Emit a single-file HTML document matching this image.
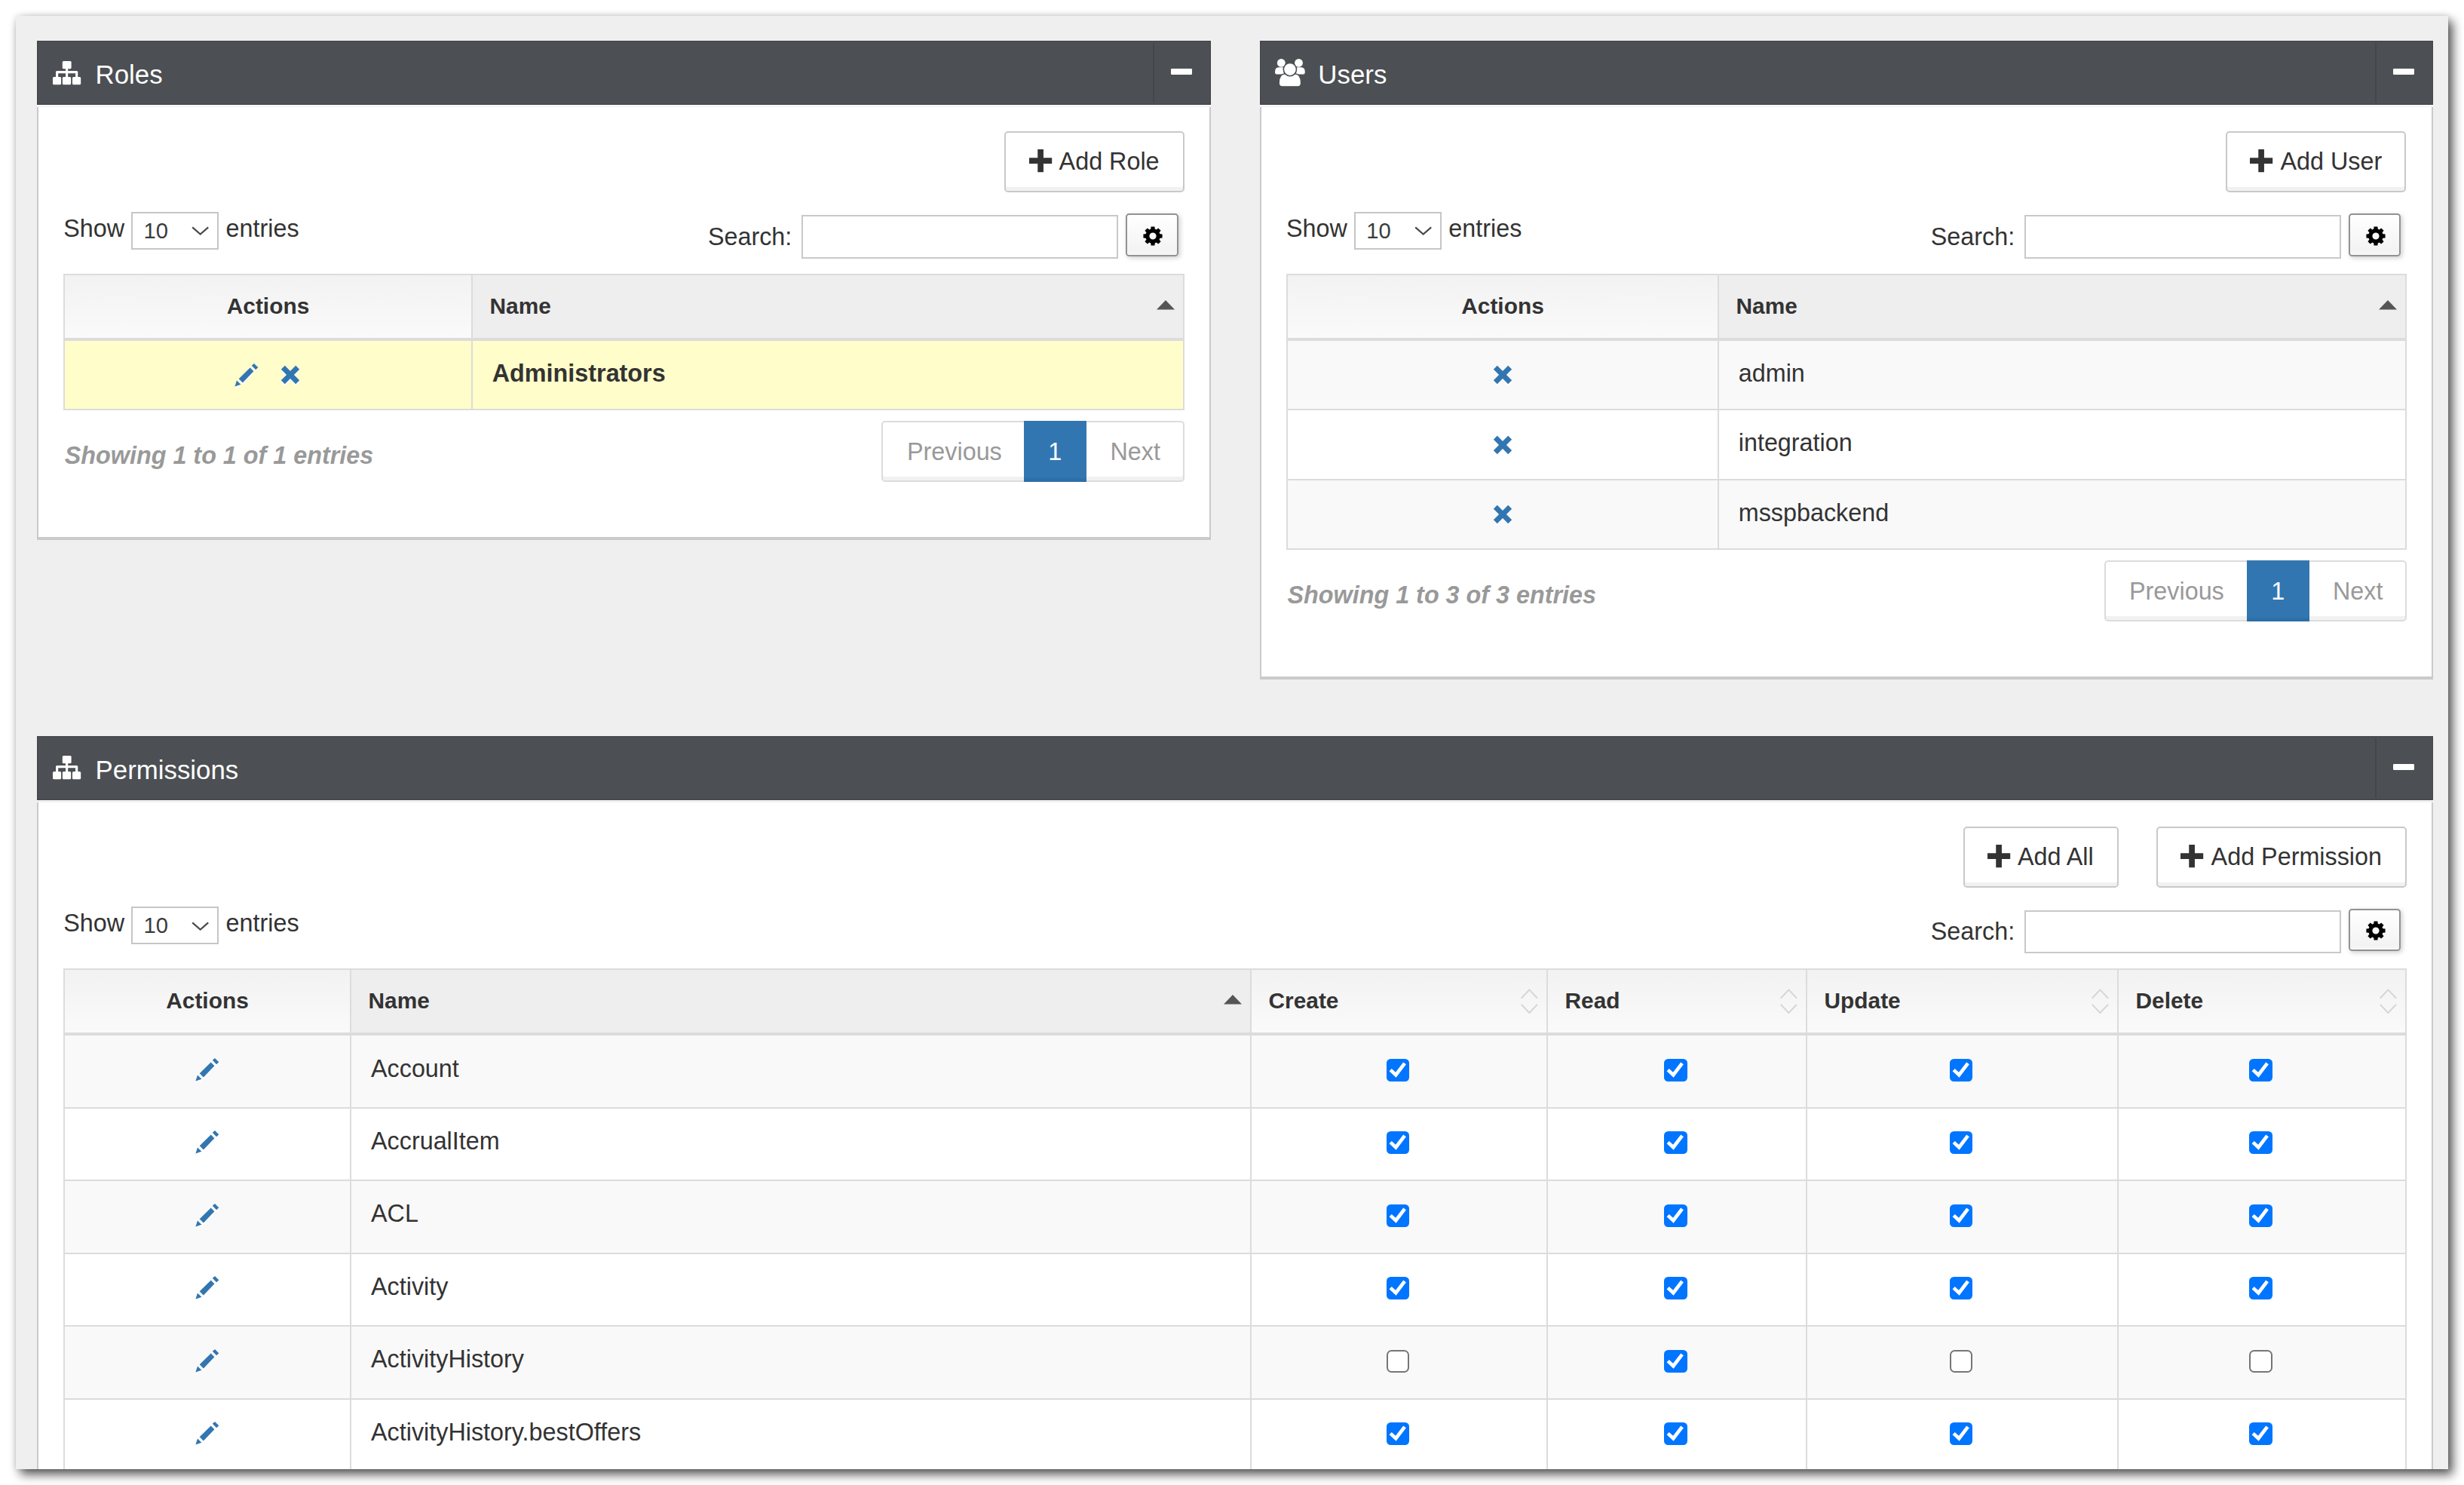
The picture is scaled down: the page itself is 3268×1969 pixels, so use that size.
<!DOCTYPE html>
<html lang="en"><head><meta charset="utf-8"><title>Roles, Users and Permissions</title>
<style>
html,body{margin:0;padding:0;background:#fff;}
body{width:3268px;height:1969px;position:relative;overflow:hidden;font-family:"Liberation Sans",Arial,Helvetica,sans-serif;}
#card{position:absolute;left:21px;top:21px;width:3226px;height:1927px;background:#efefef;border-radius:5px 2px 1px 2px;overflow:hidden;
  }
#shadow{position:absolute;left:21px;top:21px;width:3226px;height:1927px;border-radius:5px 2px 1px 2px;
  box-shadow:6px 7px 14px 0 rgba(0,0,0,.66),0 0 9px rgba(0,0,0,.13);}
#card div,#card svg,#card .t{position:absolute;}
#card svg{overflow:visible;display:block;}
.t{white-space:nowrap;margin:0;padding:0;font-weight:normal;}
#in{position:absolute;left:-21px;top:-21px;width:3268px;height:1969px;}
</style></head>
<body>
<div id="shadow"></div>
<div id="card"><div id="in">
<section aria-label="Roles">
<div class="hd" style="left:49px;top:54px;width:1557px;height:84.8px;background:#4c4f53;box-shadow:inset 0 0 0 1.3px #43464a;"></div>
<div  style="left:49px;top:138.8px;width:1557px;height:1.8px;background:#fbfbfb;"></div>
<div class="bd" style="left:49px;top:142px;width:1557px;height:573.75px;background:#fff;border:solid #cacaca;border-width:0 2px 4.6px 2px;box-sizing:border-box;"></div>
<svg style="left:70px;top:80.8px;" width="37.4" height="31.3" viewBox="0 0 37.4 31.3"><g fill="#fff"><rect x="12.8" y="0" width="11.8" height="10.3" rx="1.5"/><rect x="0" y="21" width="11.1" height="10.3" rx="1.5"/><rect x="12.9" y="21" width="11.3" height="10.3" rx="1.5"/><rect x="26.0" y="21" width="11.2" height="10.3" rx="1.5"/></g><path fill="none" stroke="#fff" stroke-width="3.2" stroke-linejoin="round" d="M5.6 22 V14.6 H31.7 V22 M18.6 9 V22"/></svg>
<h2 class="t" style="left:126.6px;top:81.9px;font-size:34.84px;line-height:34.84px;color:#fff;">Roles</h2>
<div  style="left:1529.2px;top:57px;width:2px;height:79px;background:#43464a;"></div>
<div  style="left:1552.7px;top:90.8px;width:28.8px;height:8.4px;background:#fff;border-radius:1.2px;"></div>
<div class="btn" style="left:1332.4px;top:174px;width:238.6px;height:80.6px;background:#fff;border:2px solid #c9c9c9;border-radius:5px;box-sizing:border-box;box-shadow:inset 0 -5px 0 rgba(0,0,0,.055);"></div>
<svg style="left:1364.7px;top:197.8px;" width="30.2" height="30.2" viewBox="0 0 30.2 30.2"><path fill="#333" d="M11.25 0h7.7v11.25h11.25v7.7h-11.25v11.25h-7.7v-11.25h-11.25v-7.7h11.25z"/></svg>
<span class="t" style="left:1404.6px;top:198.01px;font-size:32.35px;line-height:32.35px;color:#333;">Add Role</span>
<span class="t" style="left:84.2px;top:287.11px;font-size:32.35px;line-height:32.35px;color:#333;">Show</span>
<div class="sel" style="left:174.25px;top:281.25px;width:115.5px;height:49.5px;background:#fff;border:2px solid #c6c6c6;box-sizing:border-box;"></div>
<span class="t" style="left:190.5px;top:291.88px;font-size:29.2px;line-height:29.2px;color:#3c3c3c;">10</span>
<svg style="left:254.2px;top:300.4px;" width="23.4" height="12.4" viewBox="0 0 23.4 12.4"><path fill="none" stroke="#4a4a4a" stroke-width="2.2" stroke-linejoin="miter" d="M1.2 1.3 L11.7 10.5 L22.2 1.3"/></svg>
<span class="t" style="left:299.6px;top:287.11px;font-size:32.35px;line-height:32.35px;color:#333;">entries</span>
<div class="inp" style="left:1063px;top:285.4px;width:420px;height:57.3px;background:#fff;border:2px solid #c9c9c9;box-sizing:border-box;"></div>
<span class="t" style="left:938.91px;top:297.61px;font-size:32.35px;line-height:32.35px;color:#333;">Search:</span>
<div class="cv" style="left:1493px;top:283.2px;width:69.6px;height:56.6px;background:linear-gradient(#fff,#f3f3f3 89%,#f7f7f7);border:2px solid #929292;border-radius:4.5px;box-sizing:border-box;box-shadow:2px 2px 6px rgba(0,0,0,.2);"></div>
<svg style="left:1514.6px;top:298.8px;" width="28" height="28" viewBox="-14 -14 28 28"><path fill="#000" fill-rule="evenodd" d="M-2.7 -9.42 L-2.44 -12.56 L2.44 -12.56 L2.7 -9.42 L4.75 -8.57 L7.16 -10.61 L10.61 -7.16 L8.57 -4.75 L9.42 -2.7 L12.56 -2.44 L12.56 2.44 L9.42 2.7 L8.57 4.75 L10.61 7.16 L7.16 10.61 L4.75 8.57 L2.7 9.42 L2.44 12.56 L-2.44 12.56 L-2.7 9.42 L-4.75 8.57 L-7.16 10.61 L-10.61 7.16 L-8.57 4.75 L-9.42 2.7 L-12.56 2.44 L-12.56 -2.44 L-9.42 -2.7 L-8.57 -4.75 L-10.61 -7.16 L-7.16 -10.61 L-4.75 -8.57Z M4.6 0 A4.6 4.6 0 1 0 -4.6 0 A4.6 4.6 0 1 0 4.6 0Z"/></svg>
<div class="tb" style="left:84px;top:363px;width:1487px;height:181px;background:#dcdcdc;"></div>
<div class="th" style="left:86px;top:365px;width:539px;height:83px;background:linear-gradient(#f2f2f2,#fafafa);"></div>
<span class="t" style="left:300.75px;top:391.32px;font-size:29.86px;line-height:29.86px;color:#333;font-weight:bold;">Actions</span>
<div class="th" style="left:627px;top:365px;width:942px;height:83px;background:#eee;"></div>
<span class="t" style="left:649.5px;top:391.32px;font-size:29.86px;line-height:29.86px;color:#333;font-weight:bold;">Name</span>
<svg style="left:1533.6px;top:397.8px;" width="24" height="12.6" viewBox="0 0 24 12.6"><path fill="#555" d="M12 0L24 12.6H0Z"/></svg>
<div class="td" style="left:86px;top:452px;width:539px;height:90px;background:#fffdc9;"></div>
<svg style="left:310.5px;top:481.6px;" width="32" height="34" viewBox="0 0 32 34"><path fill="#fff" d="M26 2.5 L31.3 7.67 L28.1 10.85 L22.8 5.24Z"/><path fill="#fff" d="M20.7 7.97 L25.4 12.67 L10.86 27.97 L5.7 22.67Z"/><path fill="#fff" d="M2.98 25.1 L8.44 30.24 L0.4 33.1Z"/><path fill="#3276b1" d="M26 0 L31.3 5.17 L28.1 8.35 L22.8 2.74Z"/><path fill="#3276b1" d="M20.7 5.47 L25.4 10.17 L10.86 25.47 L5.7 20.17Z"/><path fill="#3276b1" d="M2.98 22.6 L8.44 27.74 L0.4 30.6Z"/></svg>
<svg style="left:365.1px;top:477.1px;" width="40" height="44" viewBox="0 0 40 44"><path transform="translate(20 22.5) rotate(45)" fill="#fff" d="M-3.5 -13.7h7v10.2h10.2v7h-10.2v10.2h-7v-10.2h-10.2v-7h10.2z"/><path transform="translate(20 20) rotate(45)" fill="#3276b1" d="M-3.5 -13.7h7v10.2h10.2v7h-10.2v10.2h-7v-10.2h-10.2v-7h10.2z"/></svg>
<div class="td" style="left:627px;top:452px;width:942px;height:90px;background:#fffdc9;"></div>
<span class="t" style="left:652.75px;top:478.86px;font-size:32.35px;line-height:32.35px;color:#333;font-weight:bold;">Administrators</span>
<span class="t" style="left:85.75px;top:587.61px;font-size:32.35px;line-height:32.35px;color:#999;font-weight:bold;font-style:italic;">Showing 1 to 1 of 1 entries</span>
<div class="pg" style="left:1169.3px;top:558px;width:401.9px;height:80.75px;background:#fff;border:2px solid #dcdcdc;border-radius:5px;box-sizing:border-box;box-shadow:inset 0 -5px 0 rgba(0,0,0,.055);"></div>
<div  style="left:1358px;top:558px;width:83px;height:80.75px;background:#3276b1;box-shadow:inset 0 -5px 0 rgba(0,0,0,.055);"></div>
<span class="t" style="left:1203px;top:582.61px;font-size:32.35px;line-height:32.35px;color:#999;">Previous</span>
<span class="t" style="left:1390.3px;top:582.61px;font-size:32.35px;line-height:32.35px;color:#fff;">1</span>
<span class="t" style="left:1472.5px;top:582.61px;font-size:32.35px;line-height:32.35px;color:#999;">Next</span>
</section>
<section aria-label="Users">
<div class="hd" style="left:1670.75px;top:54px;width:1556.25px;height:84.8px;background:#4c4f53;box-shadow:inset 0 0 0 1.3px #43464a;"></div>
<div  style="left:1670.75px;top:138.8px;width:1556.25px;height:1.8px;background:#fbfbfb;"></div>
<div class="bd" style="left:1670.75px;top:142px;width:1556.25px;height:758.75px;background:#fff;border:solid #cacaca;border-width:0 2px 4.6px 2px;box-sizing:border-box;"></div>
<svg style="left:1691.25px;top:77.5px;" width="39.8" height="36.8" viewBox="0 0 39.8 36.8"><g fill="#fff"><circle cx="8.3" cy="5.4" r="5.4"/><circle cx="31.5" cy="5.4" r="5.4"/><path d="M0 17.5 Q0 11.3 5 11.3 L12 11.3 L12 20.6 L3.2 20.6 Q0 20.6 0 17.7Z"/><path d="M39.8 17.5 Q39.8 11.3 34.8 11.3 L27.8 11.3 L27.8 20.6 L36.6 20.6 Q39.8 20.6 39.8 17.7Z"/><path d="M5.3 32 Q5.3 19.8 13.5 19.8 L26.3 19.8 Q34.5 19.8 34.5 32 Q34.5 36.8 30 36.8 L9.8 36.8 Q5.3 36.8 5.3 32Z" stroke="#4c4f53" stroke-width="1.2"/><circle cx="19.9" cy="14.1" r="8.6" stroke="#4c4f53" stroke-width="1.6"/></g></svg>
<h2 class="t" style="left:1748.35px;top:81.9px;font-size:34.84px;line-height:34.84px;color:#fff;">Users</h2>
<div  style="left:3150.2px;top:57px;width:2px;height:79px;background:#43464a;"></div>
<div  style="left:3173.7px;top:90.8px;width:28.8px;height:8.4px;background:#fff;border-radius:1.2px;"></div>
<div class="btn" style="left:2952.3px;top:174px;width:239.2px;height:80.6px;background:#fff;border:2px solid #c9c9c9;border-radius:5px;box-sizing:border-box;box-shadow:inset 0 -5px 0 rgba(0,0,0,.055);"></div>
<svg style="left:2984px;top:197.8px;" width="30.2" height="30.2" viewBox="0 0 30.2 30.2"><path fill="#333" d="M11.25 0h7.7v11.25h11.25v7.7h-11.25v11.25h-7.7v-11.25h-11.25v-7.7h11.25z"/></svg>
<span class="t" style="left:3024.4px;top:198.01px;font-size:32.35px;line-height:32.35px;color:#333;">Add User</span>
<span class="t" style="left:1705.95px;top:287.11px;font-size:32.35px;line-height:32.35px;color:#333;">Show</span>
<div class="sel" style="left:1796px;top:281.25px;width:115.5px;height:49.5px;background:#fff;border:2px solid #c6c6c6;box-sizing:border-box;"></div>
<span class="t" style="left:1812.25px;top:291.88px;font-size:29.2px;line-height:29.2px;color:#3c3c3c;">10</span>
<svg style="left:1875.95px;top:300.4px;" width="23.4" height="12.4" viewBox="0 0 23.4 12.4"><path fill="none" stroke="#4a4a4a" stroke-width="2.2" stroke-linejoin="miter" d="M1.2 1.3 L11.7 10.5 L22.2 1.3"/></svg>
<span class="t" style="left:1921.35px;top:287.11px;font-size:32.35px;line-height:32.35px;color:#333;">entries</span>
<div class="inp" style="left:2684.9px;top:285.4px;width:420px;height:57.3px;background:#fff;border:2px solid #c9c9c9;box-sizing:border-box;"></div>
<span class="t" style="left:2560.81px;top:297.61px;font-size:32.35px;line-height:32.35px;color:#333;">Search:</span>
<div class="cv" style="left:3114.9px;top:283.2px;width:69.6px;height:56.6px;background:linear-gradient(#fff,#f3f3f3 89%,#f7f7f7);border:2px solid #929292;border-radius:4.5px;box-sizing:border-box;box-shadow:2px 2px 6px rgba(0,0,0,.2);"></div>
<svg style="left:3136.5px;top:298.8px;" width="28" height="28" viewBox="-14 -14 28 28"><path fill="#000" fill-rule="evenodd" d="M-2.7 -9.42 L-2.44 -12.56 L2.44 -12.56 L2.7 -9.42 L4.75 -8.57 L7.16 -10.61 L10.61 -7.16 L8.57 -4.75 L9.42 -2.7 L12.56 -2.44 L12.56 2.44 L9.42 2.7 L8.57 4.75 L10.61 7.16 L7.16 10.61 L4.75 8.57 L2.7 9.42 L2.44 12.56 L-2.44 12.56 L-2.7 9.42 L-4.75 8.57 L-7.16 10.61 L-10.61 7.16 L-8.57 4.75 L-9.42 2.7 L-12.56 2.44 L-12.56 -2.44 L-9.42 -2.7 L-8.57 -4.75 L-10.61 -7.16 L-7.16 -10.61 L-4.75 -8.57Z M4.6 0 A4.6 4.6 0 1 0 -4.6 0 A4.6 4.6 0 1 0 4.6 0Z"/></svg>
<div class="tb" style="left:1706px;top:363px;width:1486px;height:366px;background:#dcdcdc;"></div>
<div class="th" style="left:1708px;top:365px;width:570px;height:83px;background:linear-gradient(#f2f2f2,#fafafa);"></div>
<span class="t" style="left:1938.25px;top:391.32px;font-size:29.86px;line-height:29.86px;color:#333;font-weight:bold;">Actions</span>
<div class="th" style="left:2280px;top:365px;width:910px;height:83px;background:#eee;"></div>
<span class="t" style="left:2302.5px;top:391.32px;font-size:29.86px;line-height:29.86px;color:#333;font-weight:bold;">Name</span>
<svg style="left:3154.6px;top:397.8px;" width="24" height="12.6" viewBox="0 0 24 12.6"><path fill="#555" d="M12 0L24 12.6H0Z"/></svg>
<div class="td" style="left:1708px;top:452px;width:570px;height:90px;background:#f9f9f9;"></div>
<svg style="left:1973px;top:477.15px;" width="40" height="44" viewBox="0 0 40 44"><path transform="translate(20 22.5) rotate(45)" fill="#fff" d="M-3.5 -13.7h7v10.2h10.2v7h-10.2v10.2h-7v-10.2h-10.2v-7h10.2z"/><path transform="translate(20 20) rotate(45)" fill="#3276b1" d="M-3.5 -13.7h7v10.2h10.2v7h-10.2v10.2h-7v-10.2h-10.2v-7h10.2z"/></svg>
<div class="td" style="left:2280px;top:452px;width:910px;height:90px;background:#f9f9f9;"></div>
<span class="t" style="left:2305.75px;top:478.86px;font-size:32.35px;line-height:32.35px;color:#333;">admin</span>
<div class="td" style="left:1708px;top:544px;width:570px;height:91px;background:#fff;"></div>
<svg style="left:1973px;top:569.65px;" width="40" height="44" viewBox="0 0 40 44"><path transform="translate(20 22.5) rotate(45)" fill="#fff" d="M-3.5 -13.7h7v10.2h10.2v7h-10.2v10.2h-7v-10.2h-10.2v-7h10.2z"/><path transform="translate(20 20) rotate(45)" fill="#3276b1" d="M-3.5 -13.7h7v10.2h10.2v7h-10.2v10.2h-7v-10.2h-10.2v-7h10.2z"/></svg>
<div class="td" style="left:2280px;top:544px;width:910px;height:91px;background:#fff;"></div>
<span class="t" style="left:2305.75px;top:571.36px;font-size:32.35px;line-height:32.35px;color:#333;">integration</span>
<div class="td" style="left:1708px;top:637px;width:570px;height:90px;background:#f9f9f9;"></div>
<svg style="left:1973px;top:662.15px;" width="40" height="44" viewBox="0 0 40 44"><path transform="translate(20 22.5) rotate(45)" fill="#fff" d="M-3.5 -13.7h7v10.2h10.2v7h-10.2v10.2h-7v-10.2h-10.2v-7h10.2z"/><path transform="translate(20 20) rotate(45)" fill="#3276b1" d="M-3.5 -13.7h7v10.2h10.2v7h-10.2v10.2h-7v-10.2h-10.2v-7h10.2z"/></svg>
<div class="td" style="left:2280px;top:637px;width:910px;height:90px;background:#f9f9f9;"></div>
<span class="t" style="left:2305.75px;top:663.86px;font-size:32.35px;line-height:32.35px;color:#333;">msspbackend</span>
<span class="t" style="left:1707.5px;top:772.86px;font-size:32.35px;line-height:32.35px;color:#999;font-weight:bold;font-style:italic;">Showing 1 to 3 of 3 entries</span>
<div class="pg" style="left:2791.2px;top:743px;width:400.8px;height:80.75px;background:#fff;border:2px solid #dcdcdc;border-radius:5px;box-sizing:border-box;box-shadow:inset 0 -5px 0 rgba(0,0,0,.055);"></div>
<div  style="left:2980px;top:743px;width:83px;height:80.75px;background:#3276b1;box-shadow:inset 0 -5px 0 rgba(0,0,0,.055);"></div>
<span class="t" style="left:2824px;top:767.61px;font-size:32.35px;line-height:32.35px;color:#999;">Previous</span>
<span class="t" style="left:3012.3px;top:767.61px;font-size:32.35px;line-height:32.35px;color:#fff;">1</span>
<span class="t" style="left:3094px;top:767.61px;font-size:32.35px;line-height:32.35px;color:#999;">Next</span>
</section>
<section aria-label="Permissions">
<div class="hd" style="left:49px;top:975.8px;width:3178px;height:84.8px;background:#4c4f53;box-shadow:inset 0 0 0 1.3px #43464a;"></div>
<div  style="left:49px;top:1060.6px;width:3178px;height:1.8px;background:#fbfbfb;"></div>
<div class="bd" style="left:49px;top:1063.8px;width:3178px;height:894.2px;background:#fff;border:solid #cacaca;border-width:0 2px 4.6px 2px;box-sizing:border-box;"></div>
<svg style="left:70px;top:1001.8px;" width="37.4" height="31.3" viewBox="0 0 37.4 31.3"><g fill="#fff"><rect x="12.8" y="0" width="11.8" height="10.3" rx="1.5"/><rect x="0" y="21" width="11.1" height="10.3" rx="1.5"/><rect x="12.9" y="21" width="11.3" height="10.3" rx="1.5"/><rect x="26.0" y="21" width="11.2" height="10.3" rx="1.5"/></g><path fill="none" stroke="#fff" stroke-width="3.2" stroke-linejoin="round" d="M5.6 22 V14.6 H31.7 V22 M18.6 9 V22"/></svg>
<h2 class="t" style="left:126.6px;top:1003.7px;font-size:34.84px;line-height:34.84px;color:#fff;">Permissions</h2>
<div  style="left:3150.2px;top:978.8px;width:2px;height:79px;background:#43464a;"></div>
<div  style="left:3173.7px;top:1012.6px;width:28.8px;height:8.4px;background:#fff;border-radius:1.2px;"></div>
<div class="btn" style="left:2604px;top:1096.2px;width:205.5px;height:80.6px;background:#fff;border:2px solid #c9c9c9;border-radius:5px;box-sizing:border-box;box-shadow:inset 0 -5px 0 rgba(0,0,0,.055);"></div>
<svg style="left:2635.9px;top:1120px;" width="30.2" height="30.2" viewBox="0 0 30.2 30.2"><path fill="#333" d="M11.25 0h7.7v11.25h11.25v7.7h-11.25v11.25h-7.7v-11.25h-11.25v-7.7h11.25z"/></svg>
<span class="t" style="left:2676px;top:1120.21px;font-size:32.35px;line-height:32.35px;color:#333;">Add All</span>
<div class="btn" style="left:2860px;top:1096.2px;width:331.8px;height:80.6px;background:#fff;border:2px solid #c9c9c9;border-radius:5px;box-sizing:border-box;box-shadow:inset 0 -5px 0 rgba(0,0,0,.055);"></div>
<svg style="left:2892.1px;top:1120px;" width="30.2" height="30.2" viewBox="0 0 30.2 30.2"><path fill="#333" d="M11.25 0h7.7v11.25h11.25v7.7h-11.25v11.25h-7.7v-11.25h-11.25v-7.7h11.25z"/></svg>
<span class="t" style="left:2932.6px;top:1120.21px;font-size:32.35px;line-height:32.35px;color:#333;">Add Permission</span>
<span class="t" style="left:84.2px;top:1208.31px;font-size:32.35px;line-height:32.35px;color:#333;">Show</span>
<div class="sel" style="left:174.25px;top:1202.45px;width:115.5px;height:49.5px;background:#fff;border:2px solid #c6c6c6;box-sizing:border-box;"></div>
<span class="t" style="left:190.5px;top:1213.08px;font-size:29.2px;line-height:29.2px;color:#3c3c3c;">10</span>
<svg style="left:254.2px;top:1221.6px;" width="23.4" height="12.4" viewBox="0 0 23.4 12.4"><path fill="none" stroke="#4a4a4a" stroke-width="2.2" stroke-linejoin="miter" d="M1.2 1.3 L11.7 10.5 L22.2 1.3"/></svg>
<span class="t" style="left:299.6px;top:1208.31px;font-size:32.35px;line-height:32.35px;color:#333;">entries</span>
<div class="inp" style="left:2684.9px;top:1206.7px;width:420px;height:57.3px;background:#fff;border:2px solid #c9c9c9;box-sizing:border-box;"></div>
<span class="t" style="left:2560.81px;top:1218.91px;font-size:32.35px;line-height:32.35px;color:#333;">Search:</span>
<div class="cv" style="left:3114.9px;top:1204.5px;width:69.6px;height:56.6px;background:linear-gradient(#fff,#f3f3f3 89%,#f7f7f7);border:2px solid #929292;border-radius:4.5px;box-sizing:border-box;box-shadow:2px 2px 6px rgba(0,0,0,.2);"></div>
<svg style="left:3136.5px;top:1220.1px;" width="28" height="28" viewBox="-14 -14 28 28"><path fill="#000" fill-rule="evenodd" d="M-2.7 -9.42 L-2.44 -12.56 L2.44 -12.56 L2.7 -9.42 L4.75 -8.57 L7.16 -10.61 L10.61 -7.16 L8.57 -4.75 L9.42 -2.7 L12.56 -2.44 L12.56 2.44 L9.42 2.7 L8.57 4.75 L10.61 7.16 L7.16 10.61 L4.75 8.57 L2.7 9.42 L2.44 12.56 L-2.44 12.56 L-2.7 9.42 L-4.75 8.57 L-7.16 10.61 L-10.61 7.16 L-8.57 4.75 L-9.42 2.7 L-12.56 2.44 L-12.56 -2.44 L-9.42 -2.7 L-8.57 -4.75 L-10.61 -7.16 L-7.16 -10.61 L-4.75 -8.57Z M4.6 0 A4.6 4.6 0 1 0 -4.6 0 A4.6 4.6 0 1 0 4.6 0Z"/></svg>
<div class="tb" style="left:84px;top:1284px;width:3108px;height:668px;background:#dcdcdc;"></div>
<div class="th" style="left:86px;top:1286px;width:378px;height:83px;background:linear-gradient(#f2f2f2,#fafafa);"></div>
<span class="t" style="left:220.25px;top:1312.32px;font-size:29.86px;line-height:29.86px;color:#333;font-weight:bold;">Actions</span>
<div class="th" style="left:466px;top:1286px;width:1192px;height:83px;background:#eee;"></div>
<span class="t" style="left:488.5px;top:1312.32px;font-size:29.86px;line-height:29.86px;color:#333;font-weight:bold;">Name</span>
<svg style="left:1622.6px;top:1318.8px;" width="24" height="12.6" viewBox="0 0 24 12.6"><path fill="#555" d="M12 0L24 12.6H0Z"/></svg>
<div class="th" style="left:1660px;top:1286px;width:391px;height:83px;background:linear-gradient(#f2f2f2,#fafafa);"></div>
<span class="t" style="left:1682.5px;top:1312.32px;font-size:29.86px;line-height:29.86px;color:#333;font-weight:bold;">Create</span>
<svg style="left:2016.5px;top:1311.3px;" width="23.4" height="33.4" viewBox="0 0 23.4 33.4"><g fill="none" stroke="#d6d6d6" stroke-width="2" stroke-linecap="round" stroke-linejoin="round"><path d="M1.3 12 L11.4 1.4 L21.5 12"/><path d="M1.3 21.4 L11.4 32 L21.5 21.4"/></g></svg>
<div class="th" style="left:2053px;top:1286px;width:342px;height:83px;background:linear-gradient(#f2f2f2,#fafafa);"></div>
<span class="t" style="left:2075.5px;top:1312.32px;font-size:29.86px;line-height:29.86px;color:#333;font-weight:bold;">Read</span>
<svg style="left:2360.5px;top:1311.3px;" width="23.4" height="33.4" viewBox="0 0 23.4 33.4"><g fill="none" stroke="#d6d6d6" stroke-width="2" stroke-linecap="round" stroke-linejoin="round"><path d="M1.3 12 L11.4 1.4 L21.5 12"/><path d="M1.3 21.4 L11.4 32 L21.5 21.4"/></g></svg>
<div class="th" style="left:2397px;top:1286px;width:411px;height:83px;background:linear-gradient(#f2f2f2,#fafafa);"></div>
<span class="t" style="left:2419.5px;top:1312.32px;font-size:29.86px;line-height:29.86px;color:#333;font-weight:bold;">Update</span>
<svg style="left:2773.5px;top:1311.3px;" width="23.4" height="33.4" viewBox="0 0 23.4 33.4"><g fill="none" stroke="#d6d6d6" stroke-width="2" stroke-linecap="round" stroke-linejoin="round"><path d="M1.3 12 L11.4 1.4 L21.5 12"/><path d="M1.3 21.4 L11.4 32 L21.5 21.4"/></g></svg>
<div class="th" style="left:2810px;top:1286px;width:380px;height:83px;background:linear-gradient(#f2f2f2,#fafafa);"></div>
<span class="t" style="left:2832.5px;top:1312.32px;font-size:29.86px;line-height:29.86px;color:#333;font-weight:bold;">Delete</span>
<svg style="left:3155.5px;top:1311.3px;" width="23.4" height="33.4" viewBox="0 0 23.4 33.4"><g fill="none" stroke="#d6d6d6" stroke-width="2" stroke-linecap="round" stroke-linejoin="round"><path d="M1.3 12 L11.4 1.4 L21.5 12"/><path d="M1.3 21.4 L11.4 32 L21.5 21.4"/></g></svg>
<div class="td" style="left:86px;top:1373px;width:378px;height:95px;background:#f9f9f9;"></div>
<svg style="left:259.4px;top:1403.1px;" width="32" height="34" viewBox="0 0 32 34"><path fill="#fff" d="M26 2.5 L31.3 7.67 L28.1 10.85 L22.8 5.24Z"/><path fill="#fff" d="M20.7 7.97 L25.4 12.67 L10.86 27.97 L5.7 22.67Z"/><path fill="#fff" d="M2.98 25.1 L8.44 30.24 L0.4 33.1Z"/><path fill="#3276b1" d="M26 0 L31.3 5.17 L28.1 8.35 L22.8 2.74Z"/><path fill="#3276b1" d="M20.7 5.47 L25.4 10.17 L10.86 25.47 L5.7 20.17Z"/><path fill="#3276b1" d="M2.98 22.6 L8.44 27.74 L0.4 30.6Z"/></svg>
<div class="td" style="left:466px;top:1373px;width:1192px;height:95px;background:#f9f9f9;"></div>
<span class="t" style="left:492px;top:1400.71px;font-size:32.35px;line-height:32.35px;color:#333;">Account</span>
<div class="td" style="left:1660px;top:1373px;width:391px;height:95px;background:#f9f9f9;"></div>
<div class="cb on" style="left:1838.95px;top:1403.75px;width:30.3px;height:30.3px;background:#0075ff;border-radius:5.5px;"><svg width="30.3" height="30.3" viewBox="0 0 30.5 30.5" style="left:0;top:0"><path fill="none" stroke="#fff" stroke-width="4.7" d="M5.2 14.7 L12.4 21.4 L24.2 5.9"/></svg></div>
<div class="td" style="left:2053px;top:1373px;width:342px;height:95px;background:#f9f9f9;"></div>
<div class="cb on" style="left:2207.45px;top:1403.75px;width:30.3px;height:30.3px;background:#0075ff;border-radius:5.5px;"><svg width="30.3" height="30.3" viewBox="0 0 30.5 30.5" style="left:0;top:0"><path fill="none" stroke="#fff" stroke-width="4.7" d="M5.2 14.7 L12.4 21.4 L24.2 5.9"/></svg></div>
<div class="td" style="left:2397px;top:1373px;width:411px;height:95px;background:#f9f9f9;"></div>
<div class="cb on" style="left:2585.95px;top:1403.75px;width:30.3px;height:30.3px;background:#0075ff;border-radius:5.5px;"><svg width="30.3" height="30.3" viewBox="0 0 30.5 30.5" style="left:0;top:0"><path fill="none" stroke="#fff" stroke-width="4.7" d="M5.2 14.7 L12.4 21.4 L24.2 5.9"/></svg></div>
<div class="td" style="left:2810px;top:1373px;width:380px;height:95px;background:#f9f9f9;"></div>
<div class="cb on" style="left:2983.45px;top:1403.75px;width:30.3px;height:30.3px;background:#0075ff;border-radius:5.5px;"><svg width="30.3" height="30.3" viewBox="0 0 30.5 30.5" style="left:0;top:0"><path fill="none" stroke="#fff" stroke-width="4.7" d="M5.2 14.7 L12.4 21.4 L24.2 5.9"/></svg></div>
<div class="td" style="left:86px;top:1470px;width:378px;height:94px;background:#fff;"></div>
<svg style="left:259.4px;top:1499.35px;" width="32" height="34" viewBox="0 0 32 34"><path fill="#fff" d="M26 2.5 L31.3 7.67 L28.1 10.85 L22.8 5.24Z"/><path fill="#fff" d="M20.7 7.97 L25.4 12.67 L10.86 27.97 L5.7 22.67Z"/><path fill="#fff" d="M2.98 25.1 L8.44 30.24 L0.4 33.1Z"/><path fill="#3276b1" d="M26 0 L31.3 5.17 L28.1 8.35 L22.8 2.74Z"/><path fill="#3276b1" d="M20.7 5.47 L25.4 10.17 L10.86 25.47 L5.7 20.17Z"/><path fill="#3276b1" d="M2.98 22.6 L8.44 27.74 L0.4 30.6Z"/></svg>
<div class="td" style="left:466px;top:1470px;width:1192px;height:94px;background:#fff;"></div>
<span class="t" style="left:492px;top:1496.96px;font-size:32.35px;line-height:32.35px;color:#333;">AccrualItem</span>
<div class="td" style="left:1660px;top:1470px;width:391px;height:94px;background:#fff;"></div>
<div class="cb on" style="left:1838.95px;top:1500px;width:30.3px;height:30.3px;background:#0075ff;border-radius:5.5px;"><svg width="30.3" height="30.3" viewBox="0 0 30.5 30.5" style="left:0;top:0"><path fill="none" stroke="#fff" stroke-width="4.7" d="M5.2 14.7 L12.4 21.4 L24.2 5.9"/></svg></div>
<div class="td" style="left:2053px;top:1470px;width:342px;height:94px;background:#fff;"></div>
<div class="cb on" style="left:2207.45px;top:1500px;width:30.3px;height:30.3px;background:#0075ff;border-radius:5.5px;"><svg width="30.3" height="30.3" viewBox="0 0 30.5 30.5" style="left:0;top:0"><path fill="none" stroke="#fff" stroke-width="4.7" d="M5.2 14.7 L12.4 21.4 L24.2 5.9"/></svg></div>
<div class="td" style="left:2397px;top:1470px;width:411px;height:94px;background:#fff;"></div>
<div class="cb on" style="left:2585.95px;top:1500px;width:30.3px;height:30.3px;background:#0075ff;border-radius:5.5px;"><svg width="30.3" height="30.3" viewBox="0 0 30.5 30.5" style="left:0;top:0"><path fill="none" stroke="#fff" stroke-width="4.7" d="M5.2 14.7 L12.4 21.4 L24.2 5.9"/></svg></div>
<div class="td" style="left:2810px;top:1470px;width:380px;height:94px;background:#fff;"></div>
<div class="cb on" style="left:2983.45px;top:1500px;width:30.3px;height:30.3px;background:#0075ff;border-radius:5.5px;"><svg width="30.3" height="30.3" viewBox="0 0 30.5 30.5" style="left:0;top:0"><path fill="none" stroke="#fff" stroke-width="4.7" d="M5.2 14.7 L12.4 21.4 L24.2 5.9"/></svg></div>
<div class="td" style="left:86px;top:1566px;width:378px;height:95px;background:#f9f9f9;"></div>
<svg style="left:259.4px;top:1595.85px;" width="32" height="34" viewBox="0 0 32 34"><path fill="#fff" d="M26 2.5 L31.3 7.67 L28.1 10.85 L22.8 5.24Z"/><path fill="#fff" d="M20.7 7.97 L25.4 12.67 L10.86 27.97 L5.7 22.67Z"/><path fill="#fff" d="M2.98 25.1 L8.44 30.24 L0.4 33.1Z"/><path fill="#3276b1" d="M26 0 L31.3 5.17 L28.1 8.35 L22.8 2.74Z"/><path fill="#3276b1" d="M20.7 5.47 L25.4 10.17 L10.86 25.47 L5.7 20.17Z"/><path fill="#3276b1" d="M2.98 22.6 L8.44 27.74 L0.4 30.6Z"/></svg>
<div class="td" style="left:466px;top:1566px;width:1192px;height:95px;background:#f9f9f9;"></div>
<span class="t" style="left:492px;top:1593.46px;font-size:32.35px;line-height:32.35px;color:#333;">ACL</span>
<div class="td" style="left:1660px;top:1566px;width:391px;height:95px;background:#f9f9f9;"></div>
<div class="cb on" style="left:1838.95px;top:1596.5px;width:30.3px;height:30.3px;background:#0075ff;border-radius:5.5px;"><svg width="30.3" height="30.3" viewBox="0 0 30.5 30.5" style="left:0;top:0"><path fill="none" stroke="#fff" stroke-width="4.7" d="M5.2 14.7 L12.4 21.4 L24.2 5.9"/></svg></div>
<div class="td" style="left:2053px;top:1566px;width:342px;height:95px;background:#f9f9f9;"></div>
<div class="cb on" style="left:2207.45px;top:1596.5px;width:30.3px;height:30.3px;background:#0075ff;border-radius:5.5px;"><svg width="30.3" height="30.3" viewBox="0 0 30.5 30.5" style="left:0;top:0"><path fill="none" stroke="#fff" stroke-width="4.7" d="M5.2 14.7 L12.4 21.4 L24.2 5.9"/></svg></div>
<div class="td" style="left:2397px;top:1566px;width:411px;height:95px;background:#f9f9f9;"></div>
<div class="cb on" style="left:2585.95px;top:1596.5px;width:30.3px;height:30.3px;background:#0075ff;border-radius:5.5px;"><svg width="30.3" height="30.3" viewBox="0 0 30.5 30.5" style="left:0;top:0"><path fill="none" stroke="#fff" stroke-width="4.7" d="M5.2 14.7 L12.4 21.4 L24.2 5.9"/></svg></div>
<div class="td" style="left:2810px;top:1566px;width:380px;height:95px;background:#f9f9f9;"></div>
<div class="cb on" style="left:2983.45px;top:1596.5px;width:30.3px;height:30.3px;background:#0075ff;border-radius:5.5px;"><svg width="30.3" height="30.3" viewBox="0 0 30.5 30.5" style="left:0;top:0"><path fill="none" stroke="#fff" stroke-width="4.7" d="M5.2 14.7 L12.4 21.4 L24.2 5.9"/></svg></div>
<div class="td" style="left:86px;top:1663px;width:378px;height:94px;background:#fff;"></div>
<svg style="left:259.4px;top:1692.35px;" width="32" height="34" viewBox="0 0 32 34"><path fill="#fff" d="M26 2.5 L31.3 7.67 L28.1 10.85 L22.8 5.24Z"/><path fill="#fff" d="M20.7 7.97 L25.4 12.67 L10.86 27.97 L5.7 22.67Z"/><path fill="#fff" d="M2.98 25.1 L8.44 30.24 L0.4 33.1Z"/><path fill="#3276b1" d="M26 0 L31.3 5.17 L28.1 8.35 L22.8 2.74Z"/><path fill="#3276b1" d="M20.7 5.47 L25.4 10.17 L10.86 25.47 L5.7 20.17Z"/><path fill="#3276b1" d="M2.98 22.6 L8.44 27.74 L0.4 30.6Z"/></svg>
<div class="td" style="left:466px;top:1663px;width:1192px;height:94px;background:#fff;"></div>
<span class="t" style="left:492px;top:1689.96px;font-size:32.35px;line-height:32.35px;color:#333;">Activity</span>
<div class="td" style="left:1660px;top:1663px;width:391px;height:94px;background:#fff;"></div>
<div class="cb on" style="left:1838.95px;top:1693px;width:30.3px;height:30.3px;background:#0075ff;border-radius:5.5px;"><svg width="30.3" height="30.3" viewBox="0 0 30.5 30.5" style="left:0;top:0"><path fill="none" stroke="#fff" stroke-width="4.7" d="M5.2 14.7 L12.4 21.4 L24.2 5.9"/></svg></div>
<div class="td" style="left:2053px;top:1663px;width:342px;height:94px;background:#fff;"></div>
<div class="cb on" style="left:2207.45px;top:1693px;width:30.3px;height:30.3px;background:#0075ff;border-radius:5.5px;"><svg width="30.3" height="30.3" viewBox="0 0 30.5 30.5" style="left:0;top:0"><path fill="none" stroke="#fff" stroke-width="4.7" d="M5.2 14.7 L12.4 21.4 L24.2 5.9"/></svg></div>
<div class="td" style="left:2397px;top:1663px;width:411px;height:94px;background:#fff;"></div>
<div class="cb on" style="left:2585.95px;top:1693px;width:30.3px;height:30.3px;background:#0075ff;border-radius:5.5px;"><svg width="30.3" height="30.3" viewBox="0 0 30.5 30.5" style="left:0;top:0"><path fill="none" stroke="#fff" stroke-width="4.7" d="M5.2 14.7 L12.4 21.4 L24.2 5.9"/></svg></div>
<div class="td" style="left:2810px;top:1663px;width:380px;height:94px;background:#fff;"></div>
<div class="cb on" style="left:2983.45px;top:1693px;width:30.3px;height:30.3px;background:#0075ff;border-radius:5.5px;"><svg width="30.3" height="30.3" viewBox="0 0 30.5 30.5" style="left:0;top:0"><path fill="none" stroke="#fff" stroke-width="4.7" d="M5.2 14.7 L12.4 21.4 L24.2 5.9"/></svg></div>
<div class="td" style="left:86px;top:1759px;width:378px;height:95px;background:#f9f9f9;"></div>
<svg style="left:259.4px;top:1788.85px;" width="32" height="34" viewBox="0 0 32 34"><path fill="#fff" d="M26 2.5 L31.3 7.67 L28.1 10.85 L22.8 5.24Z"/><path fill="#fff" d="M20.7 7.97 L25.4 12.67 L10.86 27.97 L5.7 22.67Z"/><path fill="#fff" d="M2.98 25.1 L8.44 30.24 L0.4 33.1Z"/><path fill="#3276b1" d="M26 0 L31.3 5.17 L28.1 8.35 L22.8 2.74Z"/><path fill="#3276b1" d="M20.7 5.47 L25.4 10.17 L10.86 25.47 L5.7 20.17Z"/><path fill="#3276b1" d="M2.98 22.6 L8.44 27.74 L0.4 30.6Z"/></svg>
<div class="td" style="left:466px;top:1759px;width:1192px;height:95px;background:#f9f9f9;"></div>
<span class="t" style="left:492px;top:1786.46px;font-size:32.35px;line-height:32.35px;color:#333;">ActivityHistory</span>
<div class="td" style="left:1660px;top:1759px;width:391px;height:95px;background:#f9f9f9;"></div>
<div class="cb" style="left:1838.9px;top:1789.95px;width:30.2px;height:30.2px;background:#fff;border:2.3px solid #767676;border-radius:6.5px;box-sizing:border-box;"></div>
<div class="td" style="left:2053px;top:1759px;width:342px;height:95px;background:#f9f9f9;"></div>
<div class="cb on" style="left:2207.45px;top:1789.5px;width:30.3px;height:30.3px;background:#0075ff;border-radius:5.5px;"><svg width="30.3" height="30.3" viewBox="0 0 30.5 30.5" style="left:0;top:0"><path fill="none" stroke="#fff" stroke-width="4.7" d="M5.2 14.7 L12.4 21.4 L24.2 5.9"/></svg></div>
<div class="td" style="left:2397px;top:1759px;width:411px;height:95px;background:#f9f9f9;"></div>
<div class="cb" style="left:2585.9px;top:1789.95px;width:30.2px;height:30.2px;background:#fff;border:2.3px solid #767676;border-radius:6.5px;box-sizing:border-box;"></div>
<div class="td" style="left:2810px;top:1759px;width:380px;height:95px;background:#f9f9f9;"></div>
<div class="cb" style="left:2983.4px;top:1789.95px;width:30.2px;height:30.2px;background:#fff;border:2.3px solid #767676;border-radius:6.5px;box-sizing:border-box;"></div>
<div class="td" style="left:86px;top:1856px;width:378px;height:94px;background:#fff;"></div>
<svg style="left:259.4px;top:1885.1px;" width="32" height="34" viewBox="0 0 32 34"><path fill="#fff" d="M26 2.5 L31.3 7.67 L28.1 10.85 L22.8 5.24Z"/><path fill="#fff" d="M20.7 7.97 L25.4 12.67 L10.86 27.97 L5.7 22.67Z"/><path fill="#fff" d="M2.98 25.1 L8.44 30.24 L0.4 33.1Z"/><path fill="#3276b1" d="M26 0 L31.3 5.17 L28.1 8.35 L22.8 2.74Z"/><path fill="#3276b1" d="M20.7 5.47 L25.4 10.17 L10.86 25.47 L5.7 20.17Z"/><path fill="#3276b1" d="M2.98 22.6 L8.44 27.74 L0.4 30.6Z"/></svg>
<div class="td" style="left:466px;top:1856px;width:1192px;height:94px;background:#fff;"></div>
<span class="t" style="left:492px;top:1882.71px;font-size:32.35px;line-height:32.35px;color:#333;">ActivityHistory.bestOffers</span>
<div class="td" style="left:1660px;top:1856px;width:391px;height:94px;background:#fff;"></div>
<div class="cb on" style="left:1838.95px;top:1885.75px;width:30.3px;height:30.3px;background:#0075ff;border-radius:5.5px;"><svg width="30.3" height="30.3" viewBox="0 0 30.5 30.5" style="left:0;top:0"><path fill="none" stroke="#fff" stroke-width="4.7" d="M5.2 14.7 L12.4 21.4 L24.2 5.9"/></svg></div>
<div class="td" style="left:2053px;top:1856px;width:342px;height:94px;background:#fff;"></div>
<div class="cb on" style="left:2207.45px;top:1885.75px;width:30.3px;height:30.3px;background:#0075ff;border-radius:5.5px;"><svg width="30.3" height="30.3" viewBox="0 0 30.5 30.5" style="left:0;top:0"><path fill="none" stroke="#fff" stroke-width="4.7" d="M5.2 14.7 L12.4 21.4 L24.2 5.9"/></svg></div>
<div class="td" style="left:2397px;top:1856px;width:411px;height:94px;background:#fff;"></div>
<div class="cb on" style="left:2585.95px;top:1885.75px;width:30.3px;height:30.3px;background:#0075ff;border-radius:5.5px;"><svg width="30.3" height="30.3" viewBox="0 0 30.5 30.5" style="left:0;top:0"><path fill="none" stroke="#fff" stroke-width="4.7" d="M5.2 14.7 L12.4 21.4 L24.2 5.9"/></svg></div>
<div class="td" style="left:2810px;top:1856px;width:380px;height:94px;background:#fff;"></div>
<div class="cb on" style="left:2983.45px;top:1885.75px;width:30.3px;height:30.3px;background:#0075ff;border-radius:5.5px;"><svg width="30.3" height="30.3" viewBox="0 0 30.5 30.5" style="left:0;top:0"><path fill="none" stroke="#fff" stroke-width="4.7" d="M5.2 14.7 L12.4 21.4 L24.2 5.9"/></svg></div>
</section>
</div></div>
</body></html>
